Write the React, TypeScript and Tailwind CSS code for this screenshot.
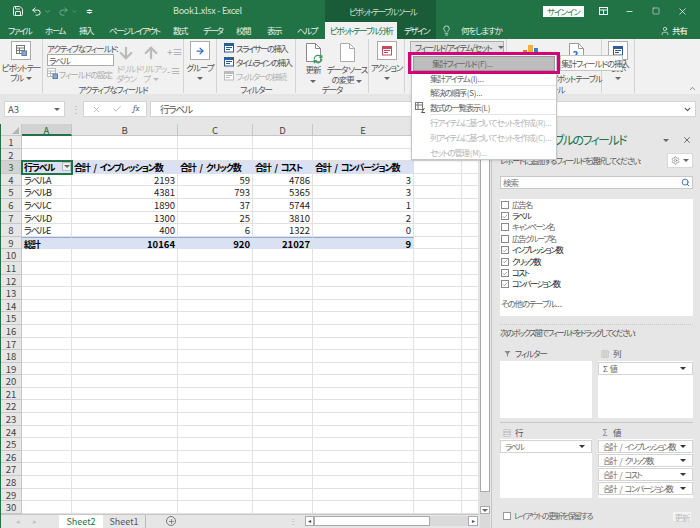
import React from "react";
import { Save, Undo2, Redo2, ChevronDown, Lightbulb, User, X, Minus, Square, Search, Settings, ArrowRight, ArrowDown, ArrowUp, RefreshCw, ChevronUp, Filter, Plus, Check } from "lucide-react";

const cols = ["w-[50px]", "w-[106px]", "w-[75px]", "w-[60px]", "w-[101px]", "w-[48px]", "w-[17px]"];
const heads = ["A", "B", "C", "D", "E", "", ""];
type Row = { label: string; suffix?: string; v: string[] };
const data: Record<number, Row> = {
  4: { label: "ラベル", suffix: "A", v: ["2193", "59", "4786", "3"] },
  5: { label: "ラベル", suffix: "B", v: ["4381", "793", "5365", "3"] },
  6: { label: "ラベル", suffix: "C", v: ["1890", "37", "5744", "1"] },
  7: { label: "ラベル", suffix: "D", v: ["1300", "25", "3810", "2"] },
  8: { label: "ラベル", suffix: "E", v: ["400", "6", "1322", "0"] },
  9: { label: "総計", v: ["10164", "920", "21027", "9"] },
};
const hdr = ["合計 / インプレッション数", "合計 / クリック数", "合計 / コスト", "合計 / コンバージョン数"];

function Caret({ className = "" }: { className?: string }) {
  return <span className={`inline-block w-0 h-0 border-l-[3px] border-r-[3px] border-t-[3px] border-l-transparent border-r-transparent border-t-[#666] ${className}`} />;
}

function IconBox({ children }: { children: React.ReactNode }) {
  return <div className="w-[20px] h-[19px] bg-white border border-[#ababab] flex items-center justify-center">{children}</div>;
}

function Group({ w, label, children }: { w: string; label?: string; children: React.ReactNode }) {
  return (
    <div className={`${w} shrink-0 flex flex-col border-r border-[#d4d4d4] pt-[2px] mb-[1px]`}>
      <div className="flex-1 min-h-0">{children}</div>
      <div className="h-[8px] text-center leading-[8px] text-[#555] whitespace-nowrap">{label}</div>
    </div>
  );
}

const TableIcon = ({ c = "#777" }: { c?: string }) => (
  <svg width="11" height="11" viewBox="0 0 11 11" fill="none" stroke={c}>
    <rect x="0.5" y="0.5" width="8" height="8" fill="#fff" />
    <path d="M0.5 3h8M3.5 3v5.5M0.5 5.5h8" />
    <rect x="6" y="6" width="4.5" height="4.5" fill="#8aa9c9" stroke="#5a7fa5" />
  </svg>
);
const SlicerIcon = ({ c = "#2b5f93" }: { c?: string }) => (
  <svg width="10" height="10" viewBox="0 0 10 10" fill="none" stroke={c} className="shrink-0">
    <rect x="0.5" y="0.5" width="9" height="8.5" fill="#fff" />
    <rect x="0.5" y="0.5" width="9" height="2" fill={c} />
    <path d="M2 4.5h6M2 6.5h4" />
  </svg>
);
const BigDoc = ({ c = "#888" }: { c?: string }) => (
  <svg width="15" height="19" viewBox="0 0 15 19" fill="#fff" stroke={c}>
    <path d="M0.5 0.5h9l5 5v13h-14z" />
    <path d="M9.5 0.5v5h5" fill="none" />
  </svg>
);
const FieldIcon = () => (
  <svg width="11" height="11" viewBox="0 0 11 11" fill="none" stroke="#777" strokeWidth="1">
    <rect x="0.5" y="0.5" width="7" height="7" />
    <path d="M0.5 3h7M3 0.5v7" />
    <path d="M9.5 6L6.5 10.5h3.5" stroke="#555" />
  </svg>
);

function Sheet() {
  const rows = Array.from({ length: 30 }, (_, i) => i + 1);
  const kana = "text-[9px] tracking-[-1.15px]";
  return (
    <div className="flex flex-col tracking-normal">
      <div className="flex h-[12px] bg-[#e6e6e6] text-[9.5px] text-[#444] leading-[12px]">
        <div className="w-[21px] shrink-0 relative border-r border-b border-[#c6c6c6]">
          <span className="absolute right-[2px] bottom-[1px] w-0 h-0 border-l-[7px] border-b-[7px] border-l-transparent border-b-[#b5b5b5]" />
        </div>
        {cols.map((c, i) => (
          <div key={i} className={`${c} shrink-0 text-center border-r border-[#c6c6c6] ${i === 0 ? "bg-[#d2d2d2] border-b-2 border-b-[#217346] text-[#1f6b41]" : "border-b"}`}>{heads[i]}</div>
        ))}
      </div>
      {rows.map((r) => {
        const isHead = r === 3;
        const isTotal = r === 9;
        const row = data[r];
        return (
          <div key={r} className="flex h-[12.6px] text-[9.5px] leading-[12px] text-[#222]">
            <div className={`w-[21px] shrink-0 text-center border-r border-b border-[#c6c6c6] ${isHead ? "bg-[#d2d2d2] text-[#1f6b41]" : "bg-[#e6e6e6] text-[#444]"}`}>{r}</div>
            {cols.map((c, i) => {
              let cls = "bg-white border-[#e1e1e1]";
              let content: React.ReactNode = null;
              if (i < 5 && (isHead || isTotal)) cls = `bg-[#d9e1f2] ${isTotal ? "border-t border-t-[#8ea9db]" : ""} border-[#d9e1f2]`;
              if (isHead && i === 0) {
                content = (
                  <>
                    <span className={`font-bold text-black pl-[2px] whitespace-nowrap ${kana}`}>行ラベル</span>
                    <span className="absolute right-0 top-[1px] w-[9px] h-[9px] bg-[#eee] border border-[#bbb] flex items-center justify-center"><Caret /></span>
                  </>
                );
                cls = "bg-[#d9e1f2] border-[#d9e1f2] outline-[2px] outline-[#217346] -outline-offset-1 z-10";
              } else if (isHead && i < 5) {
                content = <span className={`font-bold text-black pl-[2px] whitespace-nowrap [word-spacing:3px] ${kana}`}>{hdr[i - 1]}</span>;
              } else if (row && i === 0) {
                content = <span className={`pl-[2px] whitespace-nowrap ${kana} ${isTotal ? "font-bold text-black" : ""}`}>{row.label}<span className="tracking-normal">{row.suffix}</span></span>;
              } else if (row && i > 0 && i < 5) {
                content = <span className={`block text-right pr-[2px] ${isTotal ? "font-bold text-black" : ""}`}>{row.v[i - 1]}</span>;
              }
              return <div key={i} className={`${c} shrink-0 relative border-r border-b ${cls}`}>{content}</div>;
            })}
          </div>
        );
      })}
    </div>
  );
}

function FieldRow({ label, on, bold }: { label: string; on: boolean; bold?: boolean }) {
  return (
    <div className="flex items-center h-[11.4px] pl-[1px] gap-[3px]">
      <span className="w-[8px] h-[8px] border border-[#8a8a8a] bg-white flex items-center justify-center">
        {on && <Check size={7} strokeWidth={2} color="#555" />}
      </span>
      <span className={`whitespace-nowrap text-[8px] tracking-[-1.4px] ${bold ? "text-[#222]" : "text-[#666]"}`}>{label}</span>
    </div>
  );
}

function Chip({ label }: { label: string }) {
  return (
    <div className="h-[13px] bg-white border border-[#d4d4d4] flex items-center justify-between pl-[4px] pr-[6px] text-[#666] text-[8px] tracking-[-1.4px]">
      <span className="whitespace-nowrap [word-spacing:3px]">{label}</span>
      <span className="w-0 h-0 border-l-[3px] border-r-[3px] border-t-[3px] border-l-transparent border-r-transparent border-t-[#333]" />
    </div>
  );
}

function AreaLabel({ icon, text }: { icon: React.ReactNode; text: string }) {
  return (
    <div className="flex items-center gap-[4px] h-[12px] pl-[3px] text-[#555]">
      <span className="w-[8px] flex justify-center text-[#888]">{icon}</span>
      <span>{text}</span>
    </div>
  );
}

function MenuItem({ text, key2, disabled, active, line, icon }: { text: string; key2: string; disabled?: boolean; active?: boolean; line?: boolean; icon?: React.ReactNode }) {
  return (
    <div className={`relative h-[14.8px] flex items-center pl-[18px] ${disabled ? "text-[#b5b5b5]" : "text-[#666]"} ${active ? "bg-[#bdbdbd] border border-[#9a9a9a] text-[#444] mx-[1px] pl-[17px]" : ""}`}>
      {icon && <span className="absolute left-[3px] top-[2px]">{icon}</span>}
      <span className="whitespace-nowrap tracking-[-1.3px]">{text}<span className="tracking-[-0.2px] ml-[1px] text-[8px]">{key2}</span></span>
      {line && <span className="absolute left-[18px] right-0 bottom-0 border-b border-[#e4e4e4]" />}
    </div>
  );
}

export default function App() {
  return (
    <div className="relative w-[700px] h-[528px] overflow-hidden flex flex-col bg-[#e6e6e6] text-[#444] text-[8.5px] tracking-[-1.1px] [font-feature-settings:'palt']" style={{ fontFamily: '"Noto Sans CJK JP", "Noto Sans", sans-serif' }}>
      {/* title bar */}
      <div className="h-[22px] shrink-0 flex bg-[#217346] text-white items-stretch">
        <div className="w-[325px] shrink-0 flex items-center">
          <div className="w-[173px] shrink-0 flex items-center">
            <Save size={12} className="ml-[12px]" strokeWidth={1.8} />
            <Undo2 size={11} className="ml-[7px]" strokeWidth={2} />
            <ChevronDown size={7} className="ml-[2px] opacity-60" />
            <Redo2 size={11} className="ml-[7px] opacity-40" />
            <ChevronDown size={7} className="ml-[2px] opacity-40" />
            <span className="ml-[8px] text-[8px] leading-none tracking-normal">≑</span>
          </div>
          <span className="text-[9px] tracking-[-0.25px] text-[#d3e6da] whitespace-nowrap">Book1.xlsx - Excel</span>
        </div>
        <div className="w-[111px] shrink-0 bg-[#1a5c38] text-[#c9dfd2] flex items-center pl-[24px] whitespace-nowrap tracking-[-1.6px]">ピボットテーブル ツール</div>
        <div className="flex-1 flex items-center">
          <div className="ml-[107px] w-[41px] h-[11px] bg-white text-[#2b7a4f] leading-[11px] text-center">サインイン</div>
          <svg width="9" height="8" viewBox="0 0 9 8" fill="none" stroke="white" className="ml-[15px]"><rect x="0.5" y="0.5" width="8" height="7" /><path d="M0.5 3h8M4.5 3v4.5" /></svg>
          <Minus size={9} className="ml-[17px]" />
          <Square size={8} className="ml-[18px]" strokeWidth={1.5} />
          <X size={11} className="ml-[17px]" strokeWidth={1.5} />
        </div>
      </div>
      {/* tabs */}
      <div className="h-[17px] shrink-0 flex bg-[#217346] text-white leading-[17px] items-stretch whitespace-nowrap tracking-[-1.5px]">
        <div className="w-[325px] shrink-0 flex text-[#e6f0ea]">
          <span className="ml-[8px] w-[37px]">ファイル</span>
          <span className="w-[34px]">ホーム</span>
          <span className="w-[30px]">挿入</span>
          <span className="w-[64px]">ページ レイアウト</span>
          <span className="w-[30px]">数式</span>
          <span className="w-[33px]">データ</span>
          <span className="w-[31px]">校閲</span>
          <span className="w-[30px]">表示</span>
          <span>ヘルプ</span>
        </div>
        <div className="w-[72px] shrink-0 bg-[#f1f1f1] text-[#217346] text-center">ピボットテーブル分析</div>
        <div className="w-[39px] shrink-0 bg-[#1a5c38] text-center text-[#e6f0ea]">デザイン</div>
        <div className="flex-1 flex items-center">
          <Lightbulb size={11} className="ml-[5px]" strokeWidth={1.5} />
          <span className="ml-[9px] w-[36px] text-[#e6f0ea] tracking-[-1.1px]">何をしますか</span>
          <User size={10} className="ml-[163px]" strokeWidth={1.5} />
          <span className="ml-[2px] tracking-[-1px]">共有</span>
        </div>
      </div>
      {/* ribbon */}
      <div className="h-[55px] shrink-0 flex bg-[#f1f1f1] leading-[10px] text-[#555]">
        <Group w="w-[43px]">
          <div className="flex flex-col items-center">
            <IconBox><TableIcon /></IconBox>
            <div className="text-center mt-[2px] whitespace-nowrap">ピボットテー<br />ブル <Caret className="ml-[2px] mb-[1px]" /></div>
          </div>
        </Group>
        <Group w="w-[141px]" label="アクティブなフィールド">
          <div className="flex pl-[4px]">
            <div className="w-[67px] flex flex-col">
              <div className="h-[12px] mt-[1px] leading-[12px] whitespace-nowrap">アクティブなフィールド<span className="tracking-normal">:</span></div>
              <div className="h-[12px] bg-white border border-[#ababab] pl-[1px] leading-[10px]">ラベル</div>
              <div className="mt-[2px] flex items-center gap-[1px] text-[#ababab] whitespace-nowrap"><TableIcon c="#bbb" /><span>フィールドの設定</span></div>
            </div>
            <div className="w-[24px] flex flex-col items-center text-[#b5b5b5] mt-[3px]">
              <ArrowDown size={18} color="#bbb" strokeWidth={3} />
              <div className="text-center mt-[1px] whitespace-nowrap">ドリル<br />ダウン</div>
            </div>
            <div className="w-[26px] flex flex-col items-center text-[#b5b5b5] mt-[3px]">
              <ArrowUp size={18} color="#bbb" strokeWidth={3} />
              <div className="text-center mt-[1px] whitespace-nowrap">ドリルアッ<br />プ <Caret className="ml-[2px] mb-[1px] border-t-[#bbb]" /></div>
            </div>
            <div className="ml-[3px] flex flex-col gap-[9px] text-[#aaa] mt-[6px] text-[10px] tracking-normal"><span>+≡</span><span>-≡</span></div>
          </div>
        </Group>
        <Group w="w-[33px]">
          <div className="flex flex-col items-center">
            <IconBox><ArrowRight size={10} color="#2e6fbd" strokeWidth={3} /></IconBox>
            <div className="mt-[2px] whitespace-nowrap">グループ</div>
            <Caret className="mt-[5px]" />
          </div>
        </Group>
        <Group w="w-[79px]" label="フィルター">
          <div className="flex flex-col pl-[7px] pt-[1px] gap-[3px] whitespace-nowrap tracking-[-1.6px]">
            <div className="flex items-center gap-[2px] h-[11px]"><SlicerIcon />スライサーの挿入</div>
            <div className="flex items-center gap-[2px] h-[11px]"><SlicerIcon />タイムラインの挿入</div>
            <div className="flex items-center gap-[2px] h-[11px] text-[#b5b5b5]"><SlicerIcon c="#bbb" />フィルターの接続</div>
          </div>
        </Group>
        <Group w="w-[73px]" label="データ">
          <div className="flex pl-[5px] text-center">
            <div className="w-[24px] flex flex-col items-center">
              <div className="relative h-[20px] mt-[2px]">
                <BigDoc />
                <RefreshCw size={10} color="#3a9a5c" strokeWidth={3} className="absolute right-[-2px] bottom-[-1px]" />
              </div>
              <div className="mt-[1px]">更新<br /><Caret /></div>
            </div>
            <div className="ml-[3px] w-[38px] flex flex-col items-center whitespace-nowrap">
              <div className="h-[20px] mt-[2px]"><BigDoc c="#aaa" /></div>
              <div className="mt-[1px]">データ ソース<br />の変更 <Caret className="ml-[2px]" /></div>
            </div>
          </div>
        </Group>
        <Group w="w-[36px]">
          <div className="flex flex-col items-center">
            <IconBox><SlicerIcon c="#c44a5f" /></IconBox>
            <div className="mt-[2px] whitespace-nowrap">アクション</div>
            <Caret className="mt-[5px]" />
          </div>
        </Group>
        <Group w="w-[102px]">
          <div className="ml-[5px] w-[94px] h-[12px] border border-[#ababab] bg-[#e2e2e2] flex items-center pl-[2px] gap-[2px] text-[#555] whitespace-nowrap tracking-[-1.3px]">
            <FieldIcon />フィールド/アイテム/セット <Caret className="ml-[4px]" />
          </div>
        </Group>
        <Group w="w-[95px]" label="ツール">
          <div className="flex items-start">
            <div className="ml-[16px] mt-[4px] flex items-end gap-[1px] h-[9px]">
              <span className="w-[4px] h-[4px] bg-[#e86e2c]" />
              <span className="w-[5px] h-[9px] bg-[#f2b233]" />
              <span className="w-[4px] h-[6px] bg-[#3d7fc4]" />
            </div>
            <div className="ml-[18px] w-[40px] flex flex-col items-center">
              <div className="mt-[2px] h-[18px] relative">
                <BigDoc c="#9a9a9a" />
                <span className="absolute left-[4px] top-[7px] text-[11px] font-bold leading-[11px] text-[#2e6fbd] tracking-normal">?</span>
              </div>
              <div className="mt-[12px] whitespace-nowrap">ピボットテーブル</div>
            </div>
          </div>
        </Group>
        <Group w="w-[33px]">
          <div className="flex flex-col items-center">
            <IconBox><SlicerIcon /></IconBox>
            <div className="mt-[2px]">表示</div>
            <Caret className="mt-[5px]" />
          </div>
        </Group>
        <div className="flex-1 relative"><ChevronUp size={9} className="absolute right-[3px] bottom-[1px]" color="#666" /></div>
      </div>
      {/* formula band */}
      <div className="h-[30px] shrink-0 flex items-start pt-[7px] text-[9.5px]">
        <div className="ml-[4px] w-[61px] h-[16px] bg-white border border-[#d4d4d4] flex items-center justify-between pl-[3px] pr-[4px] text-[#555] tracking-normal">A3<Caret /></div>
        <span className="ml-[6px] w-[12px] leading-[16px] text-[#aaa]">⋮</span>
        <div className="w-[64px] h-[16px] bg-white border border-[#d4d4d4] flex items-center text-[#aaa] pl-[8px] gap-[11px]">
          <X size={9} /><Check size={10} /><span className="italic text-[#666] font-serif text-[9px] tracking-normal">fx</span>
        </div>
        <div className="ml-[3px] w-[546px] h-[16px] bg-white border border-[#d4d4d4] flex items-center justify-between pl-[9px] pr-[3px] text-[#555]">行ラベル<ChevronDown size={9} strokeWidth={3} /></div>
      </div>
      {/* main */}
      <div className="flex-1 flex min-h-0 border-l border-[#217346]">
        <div className="w-[478px] shrink-0 flex flex-col">
          <Sheet />
          <div className="flex-1 flex items-center bg-[#e6e6e6] text-[9px] tracking-normal border-t border-[#c6c6c6]">
            <span className="ml-[15px] text-[#c0c0c0] text-[7px]">◂</span>
            <span className="ml-[13px] text-[#c0c0c0] text-[7px]">▸</span>
            <div className="ml-[22px] w-[44px] h-full bg-white text-[#217346] text-center leading-[13px]">Sheet2</div>
            <div className="w-[43px] h-full text-center text-[#555] leading-[13px] border-r border-[#bbb]">Sheet1</div>
            <span className="ml-[20px] w-[10px] h-[10px] rounded-full border border-[#777] flex items-center justify-center"><Plus size={7} color="#666" strokeWidth={2.5} /></span>
            <span className="ml-[113px] text-[#aaa] text-[8px]">⋮</span>
            <div className="ml-[8px] w-[173px] h-[10px] flex bg-[#dadada]">
              <span className="w-[9px] h-full bg-white border border-[#aaa] text-[6px] leading-[8px] text-center">◂</span>
              <span className="w-[116px] h-full bg-white border border-[#aaa]" />
              <span className="flex-1" />
              <span className="w-[10px] h-full bg-white border border-[#aaa] text-[6px] leading-[8px] text-center">▸</span>
            </div>
          </div>
        </div>
        {/* vertical scroll */}
        <div className="w-[11px] shrink-0 flex flex-col bg-[#dadada] border-l border-[#e6e6e6] pb-[14px]">
          <div className="h-[368px] bg-white border border-[#aaa]" />
          <div className="flex-1" />
          <div className="h-[8px] bg-white border border-[#aaa] flex items-center justify-center"><Caret /></div>
        </div>
        {/* panel */}
        <div className="w-[209px] min-w-0 shrink-0 overflow-hidden border-l border-[#c6c6c6] ml-auto pl-[8px] pr-[7px] flex flex-col text-[#555] relative">
          <div className="flex h-[24px] mt-[4px] items-center justify-between">
            <span className="text-[12px] tracking-[-1.6px] text-[#217346] whitespace-nowrap">ピボットテーブルのフィールド</span>
            <span className="flex items-center gap-[13px] mr-[1px]"><Caret /><X size={10} color="#555" /></span>
          </div>
          <div className="flex items-center justify-between h-[15px] mt-[1px]">
            <span className="whitespace-nowrap text-[8px] tracking-[-1.2px]">レポートに追加するフィールドを選択してください:</span>
            <div className="w-[26px] h-[15px] bg-white border border-[#d8d8d8] flex items-center justify-center gap-[3px]"><Settings size={9} color="#888" /><Caret /></div>
          </div>
          <div className="mt-[8px] h-[13px] bg-white border border-[#c8c8c8] flex items-center justify-between pl-[2px] pr-[2px] text-[#777]">検索<Search size={9} color="#2e6fbd" strokeWidth={2.5} /></div>
          <div className="mt-[10px] h-[117px] bg-white">
            <FieldRow label="広告名" on={false} />
            <FieldRow label="ラベル" on bold />
            <FieldRow label="キャンペーン名" on={false} />
            <FieldRow label="広告グループ名" on={false} />
            <FieldRow label="インプレッション数" on bold />
            <FieldRow label="クリック数" on bold />
            <FieldRow label="コスト" on bold />
            <FieldRow label="コンバージョン数" on bold />
            <div className="pl-[1px] mt-[7px] text-[#666] tracking-[-1.2px]">その他のテーブル<span className="tracking-normal">...</span></div>
          </div>
          <div className="mt-[8px] border-t border-dotted border-[#c8c8c8] h-[16px] leading-[16px] whitespace-nowrap text-[8px] tracking-[-1.5px]">次のボックス間でフィールドをドラッグしてください:</div>
          <div className="mt-[7px] grid grid-cols-[92px_95px] gap-x-[6px]">
            <div>
              <AreaLabel icon={<Filter size={7} fill="#888" strokeWidth={0} />} text="フィルター" />
              <div className="h-[57px] mt-[2px] bg-white" />
            </div>
            <div>
              <AreaLabel icon={<span className="leading-none tracking-normal">▥</span>} text="列" />
              <div className="h-[57px] mt-[2px] bg-white pt-[1px]"><Chip label="Σ 値" /></div>
            </div>
            <div className="border-t border-[#c8c8c8] mt-[4px] pt-[3px] -mr-[6px]">
              <AreaLabel icon={<span className="leading-none tracking-normal">▤</span>} text="行" />
              <div className="h-[59px] w-[92px] mt-[1px] bg-white pt-[1px]"><Chip label="ラベル" /></div>
            </div>
            <div className="border-t border-[#c8c8c8] mt-[4px] pt-[3px]">
              <AreaLabel icon={<span className="leading-none tracking-normal">Σ</span>} text="値" />
              <div className="h-[59px] mt-[1px] bg-white pt-[1px] flex flex-col gap-[1px]">
                <Chip label="合計 / インプレッション数" />
                <Chip label="合計 / クリック数" />
                <Chip label="合計 / コスト" />
                <Chip label="合計 / コンバージョン数" />
              </div>
            </div>
          </div>
          <div className="mt-[12px] flex items-center justify-between">
            <div className="flex items-center gap-[3px] pl-[3px] text-[#666] text-[8px] tracking-[-1.4px]"><span className="w-[8px] h-[8px] bg-white border border-[#999]" />レイアウトの更新を保留する</div>
            <div className="w-[20px] h-[11px] bg-[#f4f4f4] border border-[#e6e6e6] text-[#bbb] text-center leading-[10px] mr-[1px]">更新</div>
          </div>
        </div>
      </div>
      {/* dropdown menu overlay */}
      <div className="absolute left-[411px] top-[52px] w-[146px] h-[108px] bg-white border border-[#c6c6c6] pt-[3px] shadow-sm">
        <MenuItem text="集計フィールド" key2="(F)..." active />
        <MenuItem text="集計アイテム" key2="(I)..." line />
        <MenuItem text="解決の順序" key2="(S)..." line />
        <MenuItem text="数式の一覧表示" key2="(L)" line icon={<FieldIcon />} />
        <MenuItem text="行アイテムに基づいてセットを作成" key2="(R)..." disabled />
        <MenuItem text="列アイテムに基づいてセットを作成" key2="(C)..." disabled />
        <MenuItem text="セットの管理" key2="(M)..." disabled />
      </div>
      <div className="absolute left-[408px] top-[52px] w-[152px] h-[22px] border-[3px] border-[#d4007a]" />
      <div className="absolute left-[560px] top-[55px] w-[63px] h-[16px] bg-white border border-[#c6c6c6] leading-[14px] text-center whitespace-nowrap text-[#555]">集計フィールドの挿入</div>
    </div>
  );
}
